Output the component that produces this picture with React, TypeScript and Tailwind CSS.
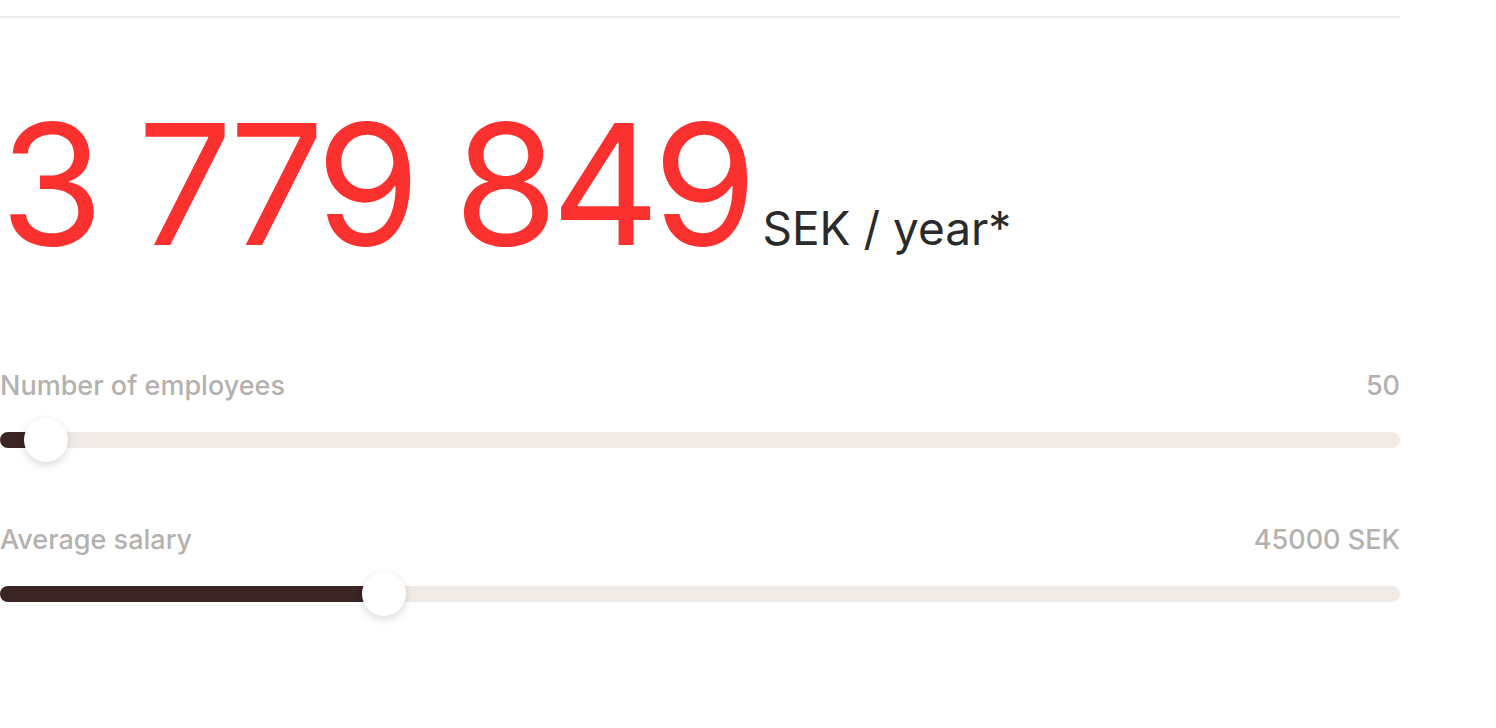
import React from 'react';

interface SliderRowProps {
  label: string;
  value: string;
  fill: number;
}

function SliderRow({ label, value, fill }: SliderRowProps) {
  return (
    <div className="flex flex-col">
      <div className="flex justify-between items-baseline text-[27px] leading-[32px] font-medium text-[#b5b1ae]">
        <span>{label}</span>
        <span>{value}</span>
      </div>
      <div className="relative mt-[30px] h-4 rounded-full bg-[#f0ebe7]">
        <div className="h-4 rounded-full bg-[#3a2424]" style={{ width: fill }} />
        <div
          className="absolute top-1/2 w-11 h-11 -translate-x-1/2 -translate-y-1/2 rounded-full bg-white shadow-[0_3px_8px_rgba(0,0,0,0.15)]"
          style={{ left: fill }}
        />
      </div>
    </div>
  );
}

export default function App() {
  return (
    <div className="min-h-screen bg-white font-['Inter',sans-serif]">
      <div className="w-[1400px] pt-4">
        <div className="h-[2px] bg-[#eeeeee]" />

        <div className="flex items-baseline mt-[82px]">
          <span className="text-[168px] leading-[168px] text-[#fb312f] tracking-[-0.04em]">3 779 849</span>
          <span className="ml-3 text-[46px] text-[#2a2a2a]">SEK / year*</span>
        </div>

        <div className="mt-[102px] flex flex-col gap-[76px]">
          <SliderRow label="Number of employees" value="50" fill={46} />
          <SliderRow label="Average salary" value="45000 SEK" fill={384} />
        </div>
      </div>
    </div>
  );
}
